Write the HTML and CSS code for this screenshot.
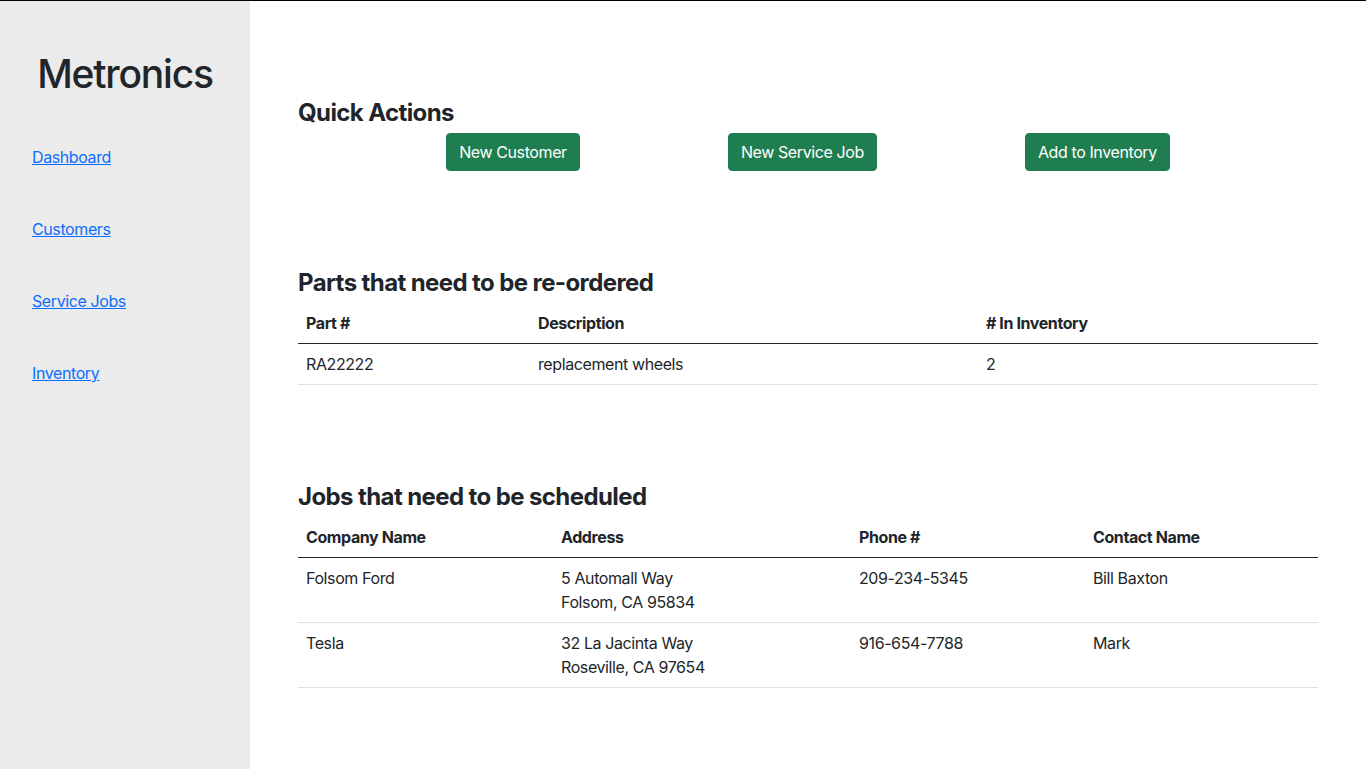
FILE: index.html
```html
<!DOCTYPE html>
<html lang="en">
<head>
<meta charset="utf-8">
<title>Metronics</title>
<link rel="stylesheet" href="styles.css">
</head>
<body>
<div class="app">
  <aside class="sidebar">
    <div class="brand">Metronics</div>
    <nav class="nav">
      <a href="#">Dashboard</a>
      <a href="#">Customers</a>
      <a href="#">Service Jobs</a>
      <a href="#">Inventory</a>
    </nav>
  </aside>
  <main class="main">
    <section class="section">
      <h2 class="heading">Quick Actions</h2>
      <div class="actions">
        <button class="btn">New Customer</button>
        <button class="btn">New Service Job</button>
        <button class="btn">Add to Inventory</button>
      </div>
    </section>
    <section class="section">
      <h2 class="heading">Parts that need to be re-ordered</h2>
      <table class="table">
        <colgroup>
          <col class="p1"><col class="p2"><col class="p3">
        </colgroup>
        <thead>
          <tr><th>Part #</th><th>Description</th><th># In Inventory</th></tr>
        </thead>
        <tbody>
          <tr><td>RA22222</td><td>replacement wheels</td><td>2</td></tr>
        </tbody>
      </table>
    </section>
    <section class="section">
      <h2 class="heading">Jobs that need to be scheduled</h2>
      <table class="table">
        <colgroup>
          <col class="j1"><col class="j2"><col class="j3"><col class="j4">
        </colgroup>
        <thead>
          <tr><th>Company Name</th><th>Address</th><th>Phone #</th><th>Contact Name</th></tr>
        </thead>
        <tbody>
          <tr><td>Folsom Ford</td><td>5 Automall Way<br>Folsom, CA 95834</td><td>209-234-5345</td><td>Bill Baxton</td></tr>
          <tr><td>Tesla</td><td>32 La Jacinta Way<br>Roseville, CA 97654</td><td>916-654-7788</td><td>Mark</td></tr>
        </tbody>
      </table>
    </section>
  </main>
</div>
</body>
</html>
```
FILE: styles.css
```css
* { box-sizing: border-box; }
html, body { margin: 0; padding: 0; }
body {
  font-family: Inter, "Noto Sans", sans-serif;
  font-size: 16px;
  line-height: 24px;
  letter-spacing: -0.4px;
  color: #212529;
  background: #fff;
  border-top: 1px solid #000;
}
.app {
  display: flex;
  min-height: 768px;
}
.sidebar {
  width: 250px;
  flex: 0 0 250px;
  background: #ebebeb;
  padding-top: 49px;
}
.brand {
  font-size: 39px;
  line-height: 48px;
  font-weight: 500;
  letter-spacing: -1.2px;
  text-align: center;
}
.nav {
  display: flex;
  flex-direction: column;
  align-items: flex-start;
  gap: 48px;
  padding: 47px 0 0 32px;
}
.nav a {
  color: #0d6efd;
  text-decoration: underline;
  font-size: 16px;
  line-height: 24px;
}
.main {
  flex: 1;
  padding: 0 48px;
}
.section {
  padding-top: 97px;
}
.heading {
  margin: 0 0 6px;
  font-size: 24px;
  line-height: 29px;
  font-weight: 700;
  letter-spacing: -0.6px;
}
.actions {
  display: flex;
  justify-content: space-evenly;
}
.btn {
  font-family: inherit;
  font-size: 16px;
  line-height: 24px;
  letter-spacing: -0.4px;
  color: #fff;
  background: #1f7e50;
  border: 1px solid #1f7e50;
  border-radius: 4px;
  padding: 6px 12px;
  cursor: pointer;
}
.table {
  width: 100%;
  border-collapse: collapse;
  table-layout: fixed;
}
.table th, .table td {
  text-align: left;
  vertical-align: top;
  padding: 8px;
  border-bottom: 1px solid #dee2e6;
}
.table th {
  font-weight: 700;
  border-bottom: 1px solid #212529;
}
.p1 { width: 232px; }
.p2 { width: 448px; }
.p3 { width: 340px; }
.j1 { width: 255px; }
.j2 { width: 298px; }
.j3 { width: 234px; }
.j4 { width: 233px; }
```
